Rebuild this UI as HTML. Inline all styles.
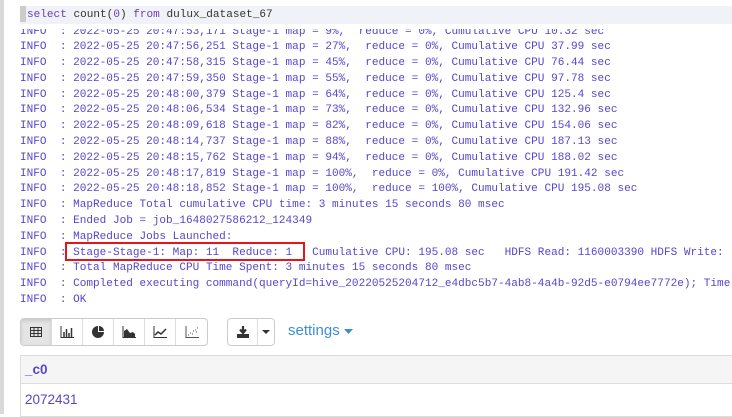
<!DOCTYPE html>
<html><head><meta charset="utf-8"><style>
*{margin:0;padding:0;box-sizing:border-box}
body{width:732px;height:414px;overflow:hidden;background:#fff;position:relative;font-family:"Liberation Mono",monospace}
.strip{position:absolute;left:0;top:0;width:4px;height:414px;background:#d9d9d9}
.q{position:absolute;left:20px;top:6px;width:712px;height:18px;background:#f1f2f7;font-size:11.07px;line-height:18px;color:#333;white-space:pre}
.q .cur{display:inline-block;width:6px;height:16px;background:#ccc;vertical-align:middle;margin-right:1px}
.q .k{color:#6a3fb0}
.log{position:absolute;left:20px;top:29px;width:712px;height:285px;overflow:hidden}
.lines{position:absolute;top:-4.5px;left:0;font-size:11.07px;line-height:15.8px;color:#5646cc;white-space:pre}
.red{position:absolute;left:65px;top:242px;width:240px;height:19px;border:2px solid #e8141b}
.bg{position:absolute;left:20px;top:318px;height:28px;display:flex;border:1px solid #ccc;border-radius:4px;overflow:hidden;background:#fff}
.bg div{width:31px;height:26px;border-right:1px solid #ddd;display:flex;align-items:center;justify-content:center}
.bg div:last-child{border-right:none}
.bg .act{background:#e4e4e4;box-shadow:inset 0 2px 3px rgba(0,0,0,.12)}
.set{position:absolute;left:288px;top:322px;font-family:"Liberation Sans",sans-serif;font-size:15px;color:#3a8fd9}
.tbl{position:absolute;left:20px;top:355px;width:720px;border:1px solid #ddd}
.th{height:28px;background:#f5f5f5;border-bottom:1px solid #ddd;font-family:"Liberation Sans",sans-serif;font-size:13.5px;color:#5646cc;padding:6px 4px;font-weight:bold}
.td{height:32px;font-family:"Liberation Sans",sans-serif;font-size:13.5px;color:#5646cc;padding:8px 4px}
</style></head><body>
<div class="strip"></div>
<div class="q"><span class="cur"></span><span class="k">select</span> count(<span class="k">0</span>) <span class="k">from</span> dulux_dataset_67</div>
<div class="log"><div class="lines">INFO  : 2022-05-25 20:47:53,171 Stage-1 map = 9%,  reduce = 0%, Cumulative CPU 10.32 sec
INFO  : 2022-05-25 20:47:56,251 Stage-1 map = 27%,  reduce = 0%, Cumulative CPU 37.99 sec
INFO  : 2022-05-25 20:47:58,315 Stage-1 map = 45%,  reduce = 0%, Cumulative CPU 76.44 sec
INFO  : 2022-05-25 20:47:59,350 Stage-1 map = 55%,  reduce = 0%, Cumulative CPU 97.78 sec
INFO  : 2022-05-25 20:48:00,379 Stage-1 map = 64%,  reduce = 0%, Cumulative CPU 125.4 sec
INFO  : 2022-05-25 20:48:06,534 Stage-1 map = 73%,  reduce = 0%, Cumulative CPU 132.96 sec
INFO  : 2022-05-25 20:48:09,618 Stage-1 map = 82%,  reduce = 0%, Cumulative CPU 154.06 sec
INFO  : 2022-05-25 20:48:14,737 Stage-1 map = 88%,  reduce = 0%, Cumulative CPU 187.13 sec
INFO  : 2022-05-25 20:48:15,762 Stage-1 map = 94%,  reduce = 0%, Cumulative CPU 188.02 sec
INFO  : 2022-05-25 20:48:17,819 Stage-1 map = 100%,  reduce = 0%, Cumulative CPU 191.42 sec
INFO  : 2022-05-25 20:48:18,852 Stage-1 map = 100%,  reduce = 100%, Cumulative CPU 195.08 sec
INFO  : MapReduce Total cumulative CPU time: 3 minutes 15 seconds 80 msec
INFO  : Ended Job = job_1648027586212_124349
INFO  : MapReduce Jobs Launched:
INFO  : Stage-Stage-1: Map: 11  Reduce: 1   Cumulative CPU: 195.08 sec   HDFS Read: 1160003390 HDFS Write: 
INFO  : Total MapReduce CPU Time Spent: 3 minutes 15 seconds 80 msec
INFO  : Completed executing command(queryId=hive_20220525204712_e4dbc5b7-4ab8-4a4b-92d5-e0794ee7772e); Time
INFO  : OK</div></div>
<div class="red"></div>
<div class="bg">
<div class="act"><svg width="12" height="10"><rect x="0.5" y="0.5" width="11" height="9" fill="none" stroke="#333"/><path d="M0 3.5H12M0 6.5H12M4 0V10M8 0V10" stroke="#333"/></svg></div>
<div><svg width="14" height="12"><path d="M1 0V11.5H14" stroke="#333" fill="none"/><path d="M4 11V6M6.5 11V3M9 11V7M11.5 11V2" stroke="#333" stroke-width="1.5"/></svg></div>
<div><svg width="12" height="12"><path d="M6 6V0A6 6 0 1 0 12 6Z" fill="#333"/><path d="M7 5V0A5 5 0 0 1 12 5Z" fill="#333"/></svg></div>
<div><svg width="14" height="12"><path d="M1 0V11.5H14" stroke="#333" fill="none"/><path d="M2 11V5L5 3L8 7L11 6L13 8V11Z" fill="#333"/></svg></div>
<div><svg width="14" height="12"><path d="M1 0V11.5H14" stroke="#333" fill="none"/><path d="M2 9L5 6L8 8L13 3" stroke="#333" stroke-width="1.5" fill="none"/></svg></div>
<div><svg width="14" height="12"><path d="M1 0V11.5H14" stroke="#555" fill="none"/><path d="M3 9h1M5 7h1M7 8h1M8 5h1M10 4h1M11 6h1M12 2h1" stroke="#555"/></svg></div>
</div>
<div class="bg" style="left:227px;width:48px">
<div style="width:31px"><svg width="12" height="12"><path d="M6 0V6M3 3.5L6 7L9 3.5" stroke="#333" stroke-width="2.2" fill="none"/><rect x="0" y="8" width="12" height="4" fill="#333"/></svg></div>
<div style="width:16px"><svg width="8" height="5"><path d="M0 0H8L4 4Z" fill="#333"/></svg></div>
</div>
<div class="set">settings <svg width="9" height="6"><path d="M0 0H9L4.5 5Z" fill="#3a8fd9"/></svg></div>
<div class="tbl"><div class="th">_c0</div><div class="td">2072431</div></div>
</body></html>
